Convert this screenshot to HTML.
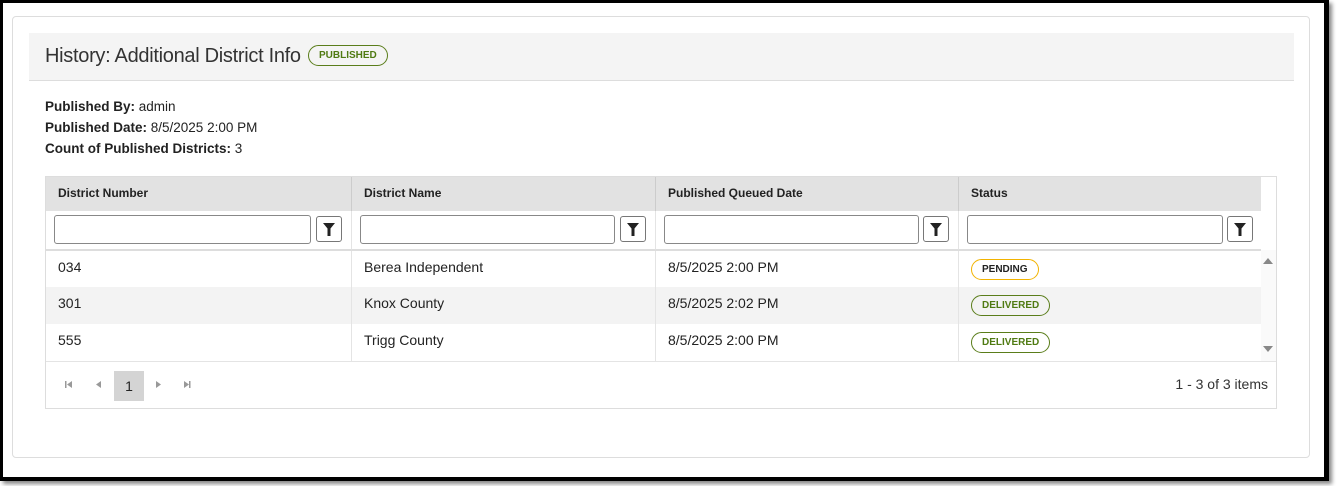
<!DOCTYPE html>
<html><head><style>
*{box-sizing:border-box;margin:0;padding:0}
body{width:1340px;height:486px;background:#fff;font-family:"Liberation Sans",Arial,sans-serif;color:#222;position:relative;overflow:hidden}
.frame{position:absolute;left:0;top:0;width:1329px;height:481px;border:3px solid #000;border-right-width:5px;border-bottom-width:4px;box-shadow:3px 3px 4px #888}
.card{position:absolute;left:12px;top:16px;width:1298px;height:442px;border:1px solid #ddd;border-radius:4px}
.hdr{position:absolute;left:29px;top:33px;width:1265px;height:48px;background:#f4f4f4;border-bottom:1px solid #ddd}
.hdr h1{position:absolute;left:16px;top:12px;font-size:20px;font-weight:normal;color:#333;letter-spacing:-0.3px}
.pill{display:inline-block;border:1px solid;border-radius:12px;font-size:10px;font-weight:bold;padding:4px 10px;line-height:11px}
.pub{position:absolute;left:279px;top:12px;border-color:#5a7d1a;color:#4f7a12}
.meta{position:absolute;left:45px;top:96px;font-size:13.5px;line-height:21px;color:#222}
.meta b{font-weight:bold}
.tbl{position:absolute;left:45px;top:176px;width:1232px;height:233px;border:1px solid #ddd}
.th{position:absolute;top:0;height:34px;background:#e2e2e2;font-size:12px;font-weight:bold;padding:9px 12px;border-left:1px solid #ccc}
.fr{position:absolute;top:34px;height:39px;border-left:1px solid #e4e4e4;border-bottom:1px solid #ddd}
.inp{position:absolute;top:4px;left:8px;height:29px;border:1px solid #888;border-radius:3px}
.fb{position:absolute;top:5px;width:26px;height:26px;border:1px solid #777;border-radius:3px}
.fb svg{position:absolute;left:6px;top:6px}
.row{position:absolute;left:0;width:1215px;height:37px;font-size:14px}
.row div{position:absolute;top:0;height:37px;padding:8px 12px;border-left:1px solid #e4e4e4}
.pend{border-color:#f2b300;color:#222}
.del{border-color:#5a7d1a;color:#4f7a12}
</style></head><body>
<div class="frame"></div>
<div class="card"></div>
<div class="hdr"><h1>History: Additional District Info</h1><span class="pill pub">PUBLISHED</span></div>
<div class="meta"><b>Published By:</b> admin<br><b>Published Date:</b> 8/5/2025 2:00 PM<br><b>Count of Published Districts:</b> 3</div>
<div class="tbl">
<div class="th" style="left:0;width:305px;border-left:none">District Number</div>
<div class="th" style="left:305px;width:304px">District Name</div>
<div class="th" style="left:609px;width:303px">Published Queued Date</div>
<div class="th" style="left:912px;width:303px">Status</div>
<div class="fr" style="left:0;width:305px;border-left:none"><div class="inp" style="width:257px"></div><div class="fb" style="left:270px"><svg width="12" height="13" viewBox="0 0 12 13"><path d="M0 0h12L7.5 5.5V13h-3V5.5z" fill="#222"/></svg></div></div>
<div class="fr" style="left:305px;width:304px"><div class="inp" style="width:255px"></div><div class="fb" style="left:268px"><svg width="12" height="13" viewBox="0 0 12 13"><path d="M0 0h12L7.5 5.5V13h-3V5.5z" fill="#222"/></svg></div></div>
<div class="fr" style="left:609px;width:303px"><div class="inp" style="width:255px"></div><div class="fb" style="left:267px"><svg width="12" height="13" viewBox="0 0 12 13"><path d="M0 0h12L7.5 5.5V13h-3V5.5z" fill="#222"/></svg></div></div>
<div class="fr" style="left:912px;width:303px"><div class="inp" style="width:256px"></div><div class="fb" style="left:268px"><svg width="12" height="13" viewBox="0 0 12 13"><path d="M0 0h12L7.5 5.5V13h-3V5.5z" fill="#222"/></svg></div></div>
<div style="position:absolute;left:1215px;top:73px;width:15px;height:111px;background:#fafafa"></div>
<svg style="position:absolute;left:1217px;top:80px" width="10" height="8"><path d="M0 7L5 1L10 7z" fill="#888"/></svg>
<svg style="position:absolute;left:1217px;top:168px" width="10" height="8"><path d="M0 1L5 7L10 1z" fill="#888"/></svg>
<div class="row" style="top:73px;border-top:1px solid #ddd"><div style="left:0;width:305px;border:none">034</div><div style="left:305px;width:304px">Berea Independent</div><div style="left:609px;width:303px">8/5/2025 2:00 PM</div><div style="left:912px;width:303px;padding-top:8px"><span class="pill pend">PENDING</span></div></div>
<div class="row" style="top:110px;background:#f3f3f3"><div style="left:0;width:305px;border:none">301</div><div style="left:305px;width:304px">Knox County</div><div style="left:609px;width:303px">8/5/2025 2:02 PM</div><div style="left:912px;width:303px;padding-top:8px"><span class="pill del">DELIVERED</span></div></div>
<div class="row" style="top:147px"><div style="left:0;width:305px;border:none">555</div><div style="left:305px;width:304px">Trigg County</div><div style="left:609px;width:303px">8/5/2025 2:00 PM</div><div style="left:912px;width:303px;padding-top:8px"><span class="pill del">DELIVERED</span></div></div>
<div style="position:absolute;left:0;top:184px;width:1230px;border-top:1px solid #e4e4e4"></div>
<div style="position:absolute;left:68px;top:194px;width:30px;height:30px;background:#d4d4d4;font-size:14px;text-align:center;line-height:30px">1</div>
<svg style="position:absolute;left:19px;top:203px" width="150" height="10"><path d="M0 1h1.5v7H0zM2 4.5L7 1v7z" fill="#999"/><path d="M31 4.5L36 1v7z" fill="#999"/><path d="M91 1L96 4.5L91 8z" fill="#999"/><path d="M119 1L124 4.5L119 8zM124 1h1.5v7H124z" fill="#999"/></svg>
<div style="position:absolute;right:8px;top:199px;font-size:14px;color:#333">1 - 3 of 3 items</div>
</div>
</body></html>
